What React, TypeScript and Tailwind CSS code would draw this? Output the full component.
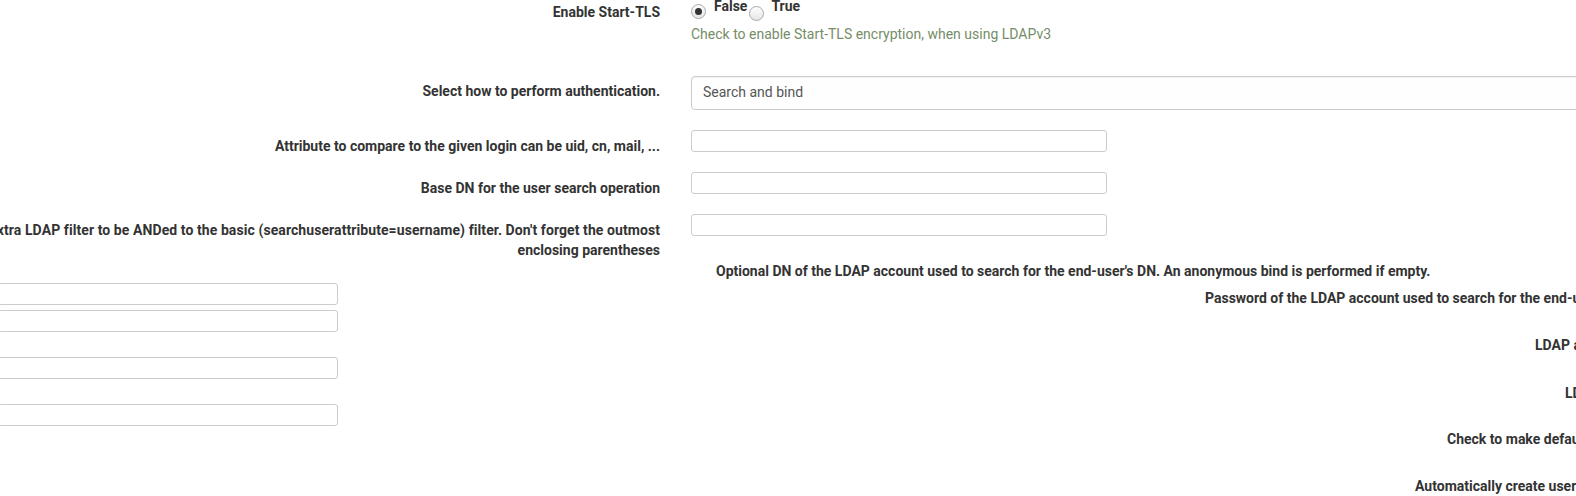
import React from "react";

function Radio({ checked, className }: { checked?: boolean; className?: string }) {
  return (
    <span
      className={
        "flex h-[15px] w-[15px] shrink-0 items-center justify-center rounded-full border border-[#a9a9a9] bg-gradient-to-b from-[#fdfdfd] to-[#e6e6e6] " +
        (className ?? "")
      }
    >
      {checked ? <span className="h-[7px] w-[7px] rounded-full bg-[#333]" /> : null}
    </span>
  );
}

function Label({ children, pt = "pt-[6px]" }: { children: React.ReactNode; pt?: string }) {
  return (
    <div className={"-ml-[340px] w-[1000px] shrink-0 text-right font-bold leading-5 " + pt}>{children}</div>
  );
}

function TextInput() {
  return <div className="h-[22px] w-[416px] rounded-[3px] border border-[#cccccc] bg-white" />;
}

function LeftInput() {
  return <div className="-ml-[2px] h-[22px] w-[340px] shrink-0 rounded-[3px] border border-[#cccccc] bg-white" />;
}

export default function App() {
  return (
    <div className="relative h-[496px] w-[1576px] overflow-hidden bg-white font-['Roboto',_'Liberation_Sans',_sans-serif] text-[14px] text-[#333333]">
      {/* Enable Start-TLS */}
      <div className="flex h-[76px]">
        <Label pt="pt-[2px]">Enable Start-TLS</Label>
        <div className="ml-[31px] shrink-0">
          <div className="flex items-start">
            <Radio checked className="mt-[4px]" />
            <span className="-mt-[4px] ml-[8px] font-bold leading-5">False</span>
            <Radio className="ml-[2px] mt-[6px]" />
            <span className="-mt-[4px] ml-[7px] font-bold leading-5">True</span>
          </div>
          <div className="mt-[3px] leading-5 text-[#768d67]">Check to enable Start-TLS encryption, when using LDAPv3</div>
        </div>
      </div>

      {/* Select */}
      <div className="flex h-[54px]">
        <Label pt="pt-[5px]">Select how to perform authentication.</Label>
        <div className="ml-[31px] flex h-[34px] w-[1000px] shrink-0 items-center rounded-[4px] border border-[#cccccc] bg-[#fefefe] px-[11px] pb-[1px] text-[#555555] shadow-[inset_0_1px_1px_rgba(0,0,0,0.06)]">
          Search and bind
        </div>
      </div>

      <div className="flex h-[42px]">
        <Label>Attribute to compare to the given login can be uid, cn, mail, ...</Label>
        <div className="ml-[31px] shrink-0">
          <TextInput />
        </div>
      </div>

      <div className="flex h-[42px]">
        <Label>Base DN for the user search operation</Label>
        <div className="ml-[31px] shrink-0">
          <TextInput />
        </div>
      </div>

      <div className="flex h-[47px]">
        <Label pt="pt-[6px]">
          <span className="tracking-[0.08px]">
            Extra LDAP filter to be ANDed to the basic (searchuserattribute=username) filter. Don't forget the outmost
          </span>
          <br />
          enclosing parentheses
        </Label>
        <div className="ml-[31px] shrink-0">
          <TextInput />
        </div>
      </div>

      {/* Broken lower section */}
      <div className="whitespace-nowrap font-bold leading-5">
        <div className="ml-[716px] h-[20px]">
          Optional DN of the LDAP account used to search for the end-user's DN. An anonymous bind is performed if empty.
        </div>
        <div className="mt-[2px] flex items-start">
          <LeftInput />
          <div className="ml-[867px] mt-[5px]">Password of the LDAP account used to search for the end-user's DN.</div>
        </div>
        <div className="mt-[2px]">
          <LeftInput />
        </div>
        <div className="ml-[1535px] mt-[3px] h-[20px]">LDAP attribute for first name</div>
        <div className="mt-[2px]">
          <LeftInput />
        </div>
        <div className="ml-[1565px] mt-[4px] h-[20px]">LDAP attribute for email</div>
        <div className="mt-[1px]">
          <LeftInput />
        </div>
        <div className="ml-[1447px] mt-[3px] h-[20px]">Check to make default group membership</div>
        <div className="ml-[1415px] mt-[27px] h-[20px]">Automatically create users on login</div>
      </div>
    </div>
  );
}
